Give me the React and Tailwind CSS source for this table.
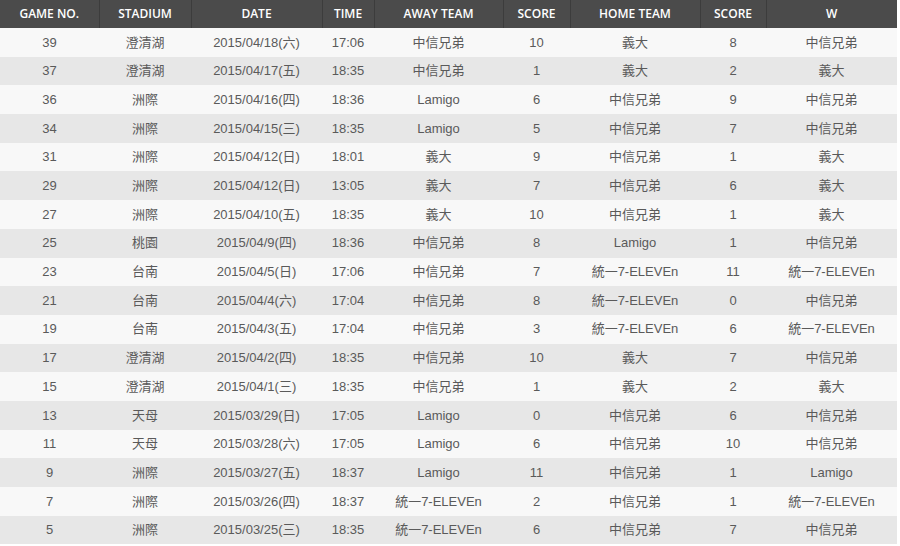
import React from 'react';

const columns = [
  { label: 'GAME NO.', width: 99 },
  { label: 'STADIUM', width: 92 },
  { label: 'DATE', width: 131 },
  { label: 'TIME', width: 52 },
  { label: 'AWAY TEAM', width: 129 },
  { label: 'SCORE', width: 67 },
  { label: 'HOME TEAM', width: 130 },
  { label: 'SCORE', width: 66 },
  { label: 'W', width: 131 },
];

const games = [
  ['39', '澄清湖', '2015/04/18(六)', '17:06', '中信兄弟', '10', '義大', '8', '中信兄弟'],
  ['37', '澄清湖', '2015/04/17(五)', '18:35', '中信兄弟', '1', '義大', '2', '義大'],
  ['36', '洲際', '2015/04/16(四)', '18:36', 'Lamigo', '6', '中信兄弟', '9', '中信兄弟'],
  ['34', '洲際', '2015/04/15(三)', '18:35', 'Lamigo', '5', '中信兄弟', '7', '中信兄弟'],
  ['31', '洲際', '2015/04/12(日)', '18:01', '義大', '9', '中信兄弟', '1', '義大'],
  ['29', '洲際', '2015/04/12(日)', '13:05', '義大', '7', '中信兄弟', '6', '義大'],
  ['27', '洲際', '2015/04/10(五)', '18:35', '義大', '10', '中信兄弟', '1', '義大'],
  ['25', '桃園', '2015/04/9(四)', '18:36', '中信兄弟', '8', 'Lamigo', '1', '中信兄弟'],
  ['23', '台南', '2015/04/5(日)', '17:06', '中信兄弟', '7', '統一7-ELEVEn', '11', '統一7-ELEVEn'],
  ['21', '台南', '2015/04/4(六)', '17:04', '中信兄弟', '8', '統一7-ELEVEn', '0', '中信兄弟'],
  ['19', '台南', '2015/04/3(五)', '17:04', '中信兄弟', '3', '統一7-ELEVEn', '6', '統一7-ELEVEn'],
  ['17', '澄清湖', '2015/04/2(四)', '18:35', '中信兄弟', '10', '義大', '7', '中信兄弟'],
  ['15', '澄清湖', '2015/04/1(三)', '18:35', '中信兄弟', '1', '義大', '2', '義大'],
  ['13', '天母', '2015/03/29(日)', '17:05', 'Lamigo', '0', '中信兄弟', '6', '中信兄弟'],
  ['11', '天母', '2015/03/28(六)', '17:05', 'Lamigo', '6', '中信兄弟', '10', '中信兄弟'],
  ['9', '洲際', '2015/03/27(五)', '18:37', 'Lamigo', '11', '中信兄弟', '1', 'Lamigo'],
  ['7', '洲際', '2015/03/26(四)', '18:37', '統一7-ELEVEn', '2', '中信兄弟', '1', '統一7-ELEVEn'],
  ['5', '洲際', '2015/03/25(三)', '18:35', '統一7-ELEVEn', '6', '中信兄弟', '7', '中信兄弟'],
];

export default function App() {
  return (
    <div className="w-[900px] h-[546px] bg-white overflow-hidden">
      <table className="w-[897px] table-fixed border-collapse text-center font-['Liberation_Sans','Noto_Sans_CJK_TC',sans-serif]">
        <colgroup>
          {columns.map((c, i) => (
            <col key={i} style={{ width: c.width }} />
          ))}
        </colgroup>
        <thead>
          <tr className="h-[28px] bg-[#4b4b4b]">
            {columns.map((c, i) => (
              <th
                key={i}
                className="border-l border-[#3c3c3c] first:border-l-0 p-0 text-[12px] font-semibold text-white font-['Open_Sans',sans-serif]"
              >
                {c.label}
              </th>
            ))}
          </tr>
        </thead>
        <tbody>
          {games.map((row, r) => (
            <tr key={r} className={`h-[28.7px] ${r % 2 === 0 ? 'bg-[#f8f8f8]' : 'bg-[#e7e7e7]'}`}>
              {row.map((cell, i) => (
                <td key={i} className="p-0 text-[13px] text-[#5a5a5a] whitespace-nowrap">
                  {cell}
                </td>
              ))}
            </tr>
          ))}
        </tbody>
      </table>
    </div>
  );
}
